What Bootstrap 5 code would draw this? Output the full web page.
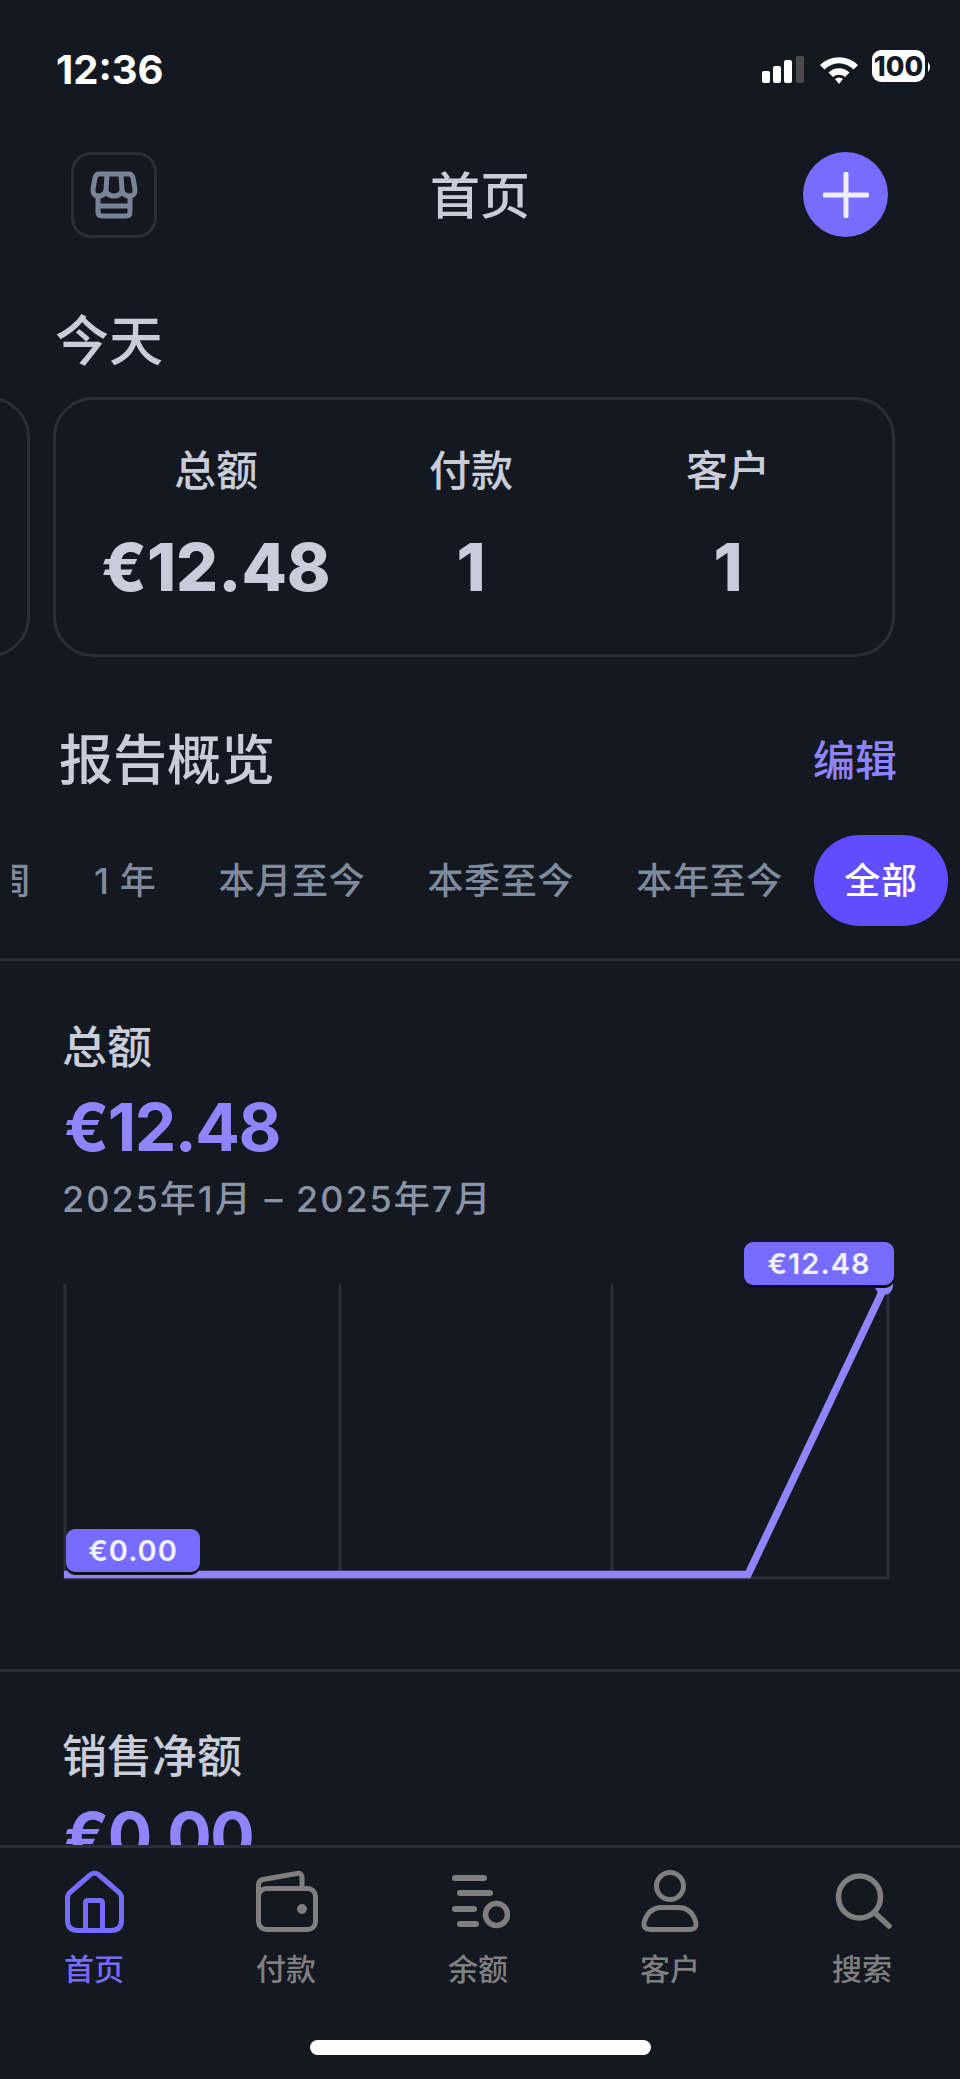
<!DOCTYPE html>
<html lang="zh-CN">

<head>
    <meta charset="utf-8">
    <title>首页</title>
    <link rel="stylesheet" href="https://cdn.jsdelivr.net/npm/bootstrap@5.3.0/dist/css/bootstrap.min.css">
    <style>
        :root {
            --app-bg: #141821;
            --app-line: #2a2e37;
            --app-text: #c9cdd9;
            --app-muted: #7f8a9c;
            --app-accent: #8f86ff;
            --app-chip: #766cff;
        }

        html,
        body {
            margin: 0;
            background-color: var(--app-bg);
        }

        body {
            font-family: Inter, "Noto Sans CJK SC", sans-serif;
            color: var(--app-text);
        }

        .app-shell {
            width: 960px;
            height: 2079px;
            overflow: hidden;
        }

        .app-main {
            min-height: 0;
            overflow: hidden;
        }

        /* status bar */
        .status-row {
            height: 152px;
            padding: 50px 29px 0 56px;
        }

        .status-time {
            font-size: 40px;
            font-weight: 700;
            line-height: 40px;
            color: #fff;
        }

        /* header */
        .top-row {
            height: 85px;
            padding: 0 72px 0 71px;
        }

        .store-btn {
            width: 86px;
            height: 86px;
            border: 3px solid var(--app-line);
            border-radius: 20px;
        }

        .plus-btn {
            width: 85px;
            height: 85px;
            background-color: var(--app-chip);
        }

        .top-title {
            font-size: 50px;
            font-weight: 500;
            line-height: 60px;
            padding-top: 2px;
        }

        /* today cards */
        .day-title {
            margin: 73px 0 0 55px;
            font-size: 54px;
            font-weight: 500;
            line-height: 64px;
        }

        .day-track {
            gap: 23px;
            padding-right: 65px;
            margin-top: 23px;
        }

        .day-card {
            flex: 0 0 842px;
            height: 260px;
            border: 3px solid var(--app-line);
            border-radius: 40px;
        }

        .day-cells {
            padding-left: 27px;
        }

        .day-cell-a {
            width: 266px;
        }

        .day-cell-b {
            width: 244px;
        }

        .day-cell-c {
            width: 270px;
        }

        .day-label {
            font-size: 42px;
            font-weight: 500;
            line-height: 50px;
            margin-top: 46px;
        }

        .day-value {
            font-size: 66px;
            font-weight: 800;
            line-height: 80px;
            margin-top: 31px;
        }

        /* report */
        .report-head {
            padding: 0 63px 0 59px;
            margin-top: 71px;
        }

        .report-title {
            font-size: 54px;
            font-weight: 500;
            line-height: 66px;
        }

        .report-edit {
            font-size: 42px;
            font-weight: 500;
            line-height: 50px;
            color: var(--app-accent);
        }

        .range-track {
            margin: 41px 12px 0;
            height: 91px;
        }

        .range-item {
            font-size: 36px;
            font-weight: 500;
            color: var(--app-muted);
            margin-right: 62px;
            white-space: nowrap;
            letter-spacing: 0.7px;
        }

        .range-on {
            width: 134px;
            height: 91px;
            margin: 0 0 0 -31px;
            background-color: #5f4dff;
            color: #fff;
        }

        .split-line {
            height: 3px;
            background-color: var(--app-line);
        }

        .range-split {
            margin-top: 32px;
        }

        /* metric blocks */
        .metric-name {
            font-size: 45px;
            line-height: 56px;
            margin: 59px 0 0 62px;
            font-weight: 500;
        }

        .metric-value {
            font-size: 66px;
            font-weight: 700;
            line-height: 80px;
            margin: 11px 0 0 64px;
            color: var(--app-accent);
            letter-spacing: -1.5px;
        }

        .metric-range {
            font-size: 36px;
            font-weight: 500;
            line-height: 44px;
            margin: 10px 0 0 62px;
            color: #8a93a6;
            letter-spacing: 2px;
        }

        .chart-box {
            width: 960px;
            height: 427px;
            margin-top: 21px;
        }

        .chart-box svg {
            display: block;
        }

        .chart-chip {
            position: absolute;
            height: 43px;
            border-radius: 9px;
            background-color: var(--app-chip);
            color: #f2f1ff;
            font-size: 29px;
            font-weight: 600;
            line-height: 43px;
            letter-spacing: 1px;
            box-shadow: 0 3px 0 #0e1016;
        }

        .chip-high {
            left: 744px;
            top: 0;
            width: 150px;
        }

        .chip-low {
            left: 66px;
            top: 287px;
            width: 134px;
        }

        .net-name {
            margin-top: 57px;
        }

        /* bottom tabs */
        .tab-bar {
            height: 234px;
            border-top: 3px solid var(--app-line);
            background-color: var(--app-bg);
            flex: 0 0 234px;
        }

        .tab-row {
            padding-top: 22px;
            margin-left: -2px;
        }

        .tab-cell {
            flex: 0 0 192px;
            color: #7f7f7f;
            font-size: 30px;
            font-weight: 500;
            line-height: 36px;
        }

        .tab-cell svg {
            display: block;
            margin-bottom: 17px;
        }

        .tab-on {
            color: var(--app-chip);
        }

        .home-bar {
            width: 341px;
            height: 15px;
            border-radius: 8px;
            background-color: #fff;
            margin: 53px auto 0;
        }
    </style>
</head>

<body>
    <div class="app-shell d-flex flex-column">
        <div class="app-main flex-grow-1">

            <!-- Status bar -->
            <div class="status-row d-flex justify-content-between align-items-start">
                <div class="status-time">12:36</div>
                <svg width="170" height="34" viewBox="0 0 170 34">
                    <g fill="#fff">
                        <rect x="1" y="21" width="8" height="12" rx="2" />
                        <rect x="12" y="16" width="8" height="17" rx="2" />
                        <rect x="23" y="10" width="8" height="23" rx="2" />
                    </g>
                    <rect x="35" y="6" width="8" height="27" rx="2" fill="#4a4a4c" />
                    <path d="M59 15 A 27 27 0 0 1 97 15 L 92.500 19.500 A 20 20 0 0 0 63.500 19.500 Z" fill="#fff" />
                    <path d="M67.500 22.500 A 15 15 0 0 1 88.500 22.500 L 84 27 A 9 9 0 0 0 72 27 Z" fill="#fff" />
                    <path d="M74 29 A 6.500 6.500 0 0 1 82 29 L 78 34 Z" fill="#fff" />
                    <rect x="111" y="0" width="53" height="32" rx="9" fill="#fff" />
                    <path d="M167 12 Q 171 17 167 22 Z" fill="#fff" />
                    <text x="137.500" y="26" text-anchor="middle" font-family="Inter, sans-serif" font-size="27" font-weight="800" fill="#141821">100</text>
                </svg>
            </div>

            <!-- Header -->
            <div class="top-row d-flex justify-content-between align-items-center">
                <div class="store-btn d-flex align-items-center justify-content-center">
                    <svg width="50" height="50" viewBox="0 0 50 50" fill="none" stroke="#7b8496" stroke-width="5" stroke-linecap="round" stroke-linejoin="round">
                        <path d="M10 4 H40 Q43 4 44 8 L46 19 Q46.500 26 40.500 26 Q35 26 33 21 Q31 26 25 26 Q19 26 17 21 Q15 26 9.500 26 Q3.500 26 4 19 L6 8 Q7 4 10 4 Z" />
                        <path d="M18 5 L17 20 M32 5 L33 20" />
                        <path d="M9 26 V42 Q9 46 13 46 H37 Q41 46 41 42 V26 M9 36 H41" />
                    </svg>
                </div>
                <div class="top-title">首页</div>
                <div class="plus-btn rounded-circle d-flex align-items-center justify-content-center">
                    <svg width="46" height="46" viewBox="0 0 46 46" stroke="#eeeeff" stroke-width="5" stroke-linecap="round">
                        <path d="M23 2 V44 M2 23 H44" />
                    </svg>
                </div>
            </div>

            <!-- Today -->
            <div class="day-title">今天</div>
            <div class="day-track d-flex justify-content-end overflow-hidden">
                <div class="day-card"></div>
                <div class="day-card day-cells d-flex text-center">
                    <div class="day-cell-a">
                        <div class="day-label">总额</div>
                        <div class="day-value">€12.48</div>
                    </div>
                    <div class="day-cell-b">
                        <div class="day-label">付款</div>
                        <div class="day-value">1</div>
                    </div>
                    <div class="day-cell-c">
                        <div class="day-label">客户</div>
                        <div class="day-value">1</div>
                    </div>
                </div>
            </div>

            <!-- Report overview -->
            <div class="report-head d-flex justify-content-between align-items-center">
                <div class="report-title">报告概览</div>
                <div class="report-edit">编辑</div>
            </div>
            <div class="range-track d-flex justify-content-end align-items-center overflow-hidden">
                <div class="range-item flex-shrink-0">1 周</div>
                <div class="range-item flex-shrink-0">1 年</div>
                <div class="range-item flex-shrink-0">本月至今</div>
                <div class="range-item flex-shrink-0">本季至今</div>
                <div class="range-item flex-shrink-0">本年至今</div>
                <div class="range-item range-on flex-shrink-0 rounded-pill d-flex align-items-center justify-content-center">全部</div>
            </div>
            <div class="split-line range-split"></div>

            <!-- Total -->
            <div class="metric-name">总额</div>
            <div class="metric-value">€12.48</div>
            <div class="metric-range">2025年1月 – 2025年7月</div>
            <div class="chart-box position-relative">
                <svg width="960" height="352" viewBox="0 0 960 352" fill="none">
                    <path d="M65 42 V336 H888 V42 M340 42 V336 M612 42 V336" stroke="#2a2e37" stroke-width="3" />
                    <path d="M64 332.500 H748 L884 46" stroke="#8f86ff" stroke-width="7.500" />
                    <circle cx="884" cy="44" r="9" fill="#8f86ff" />
                </svg>
                <div class="chart-chip chip-high text-center">€12.48</div>
                <div class="chart-chip chip-low text-center">€0.00</div>
            </div>
            <div class="split-line"></div>

            <!-- Net sales, runs under the tab bar -->
            <div class="metric-name net-name">销售净额</div>
            <div class="metric-value">€0.00</div>
        </div>

        <!-- Bottom tabs -->
        <div class="tab-bar">
            <div class="tab-row d-flex text-center">
                <div class="tab-cell tab-on d-flex flex-column align-items-center">
                    <svg width="64" height="64" viewBox="0 0 64 64" fill="none" stroke="currentColor" stroke-width="5" stroke-linecap="round" stroke-linejoin="round">
                        <path d="M5.500 28 Q5.500 24 9 21.500 L28 5 Q32.500 1.500 37 5 L56 21.500 Q59.500 24 59.500 28 V50 Q59.500 60.500 49 60.500 H16 Q5.500 60.500 5.500 50 Z" />
                        <path d="M23.500 60 V33 Q23.500 30.500 26 30.500 H38 Q40.500 30.500 40.500 33 V60" />
                    </svg>
                    首页
                </div>
                <div class="tab-cell d-flex flex-column align-items-center">
                    <svg width="64" height="64" viewBox="0 0 64 64" fill="none" stroke="currentColor" stroke-width="5" stroke-linecap="round" stroke-linejoin="round">
                        <rect x="4.500" y="18.500" width="57" height="41" rx="8" />
                        <path d="M4.500 26 V15 Q4.500 10.500 9 9.500 L43 3.500 Q48 2.500 48 8 V18" />
                        <circle cx="48" cy="39" r="5" fill="currentColor" stroke="none" />
                    </svg>
                    付款
                </div>
                <div class="tab-cell d-flex flex-column align-items-center">
                    <svg width="64" height="64" viewBox="0 0 64 64" fill="none" stroke="currentColor" stroke-width="5.500" stroke-linecap="round" stroke-linejoin="round">
                        <path d="M9 8 H38 M14 23 H44 M9 39 H28 M14 54 H30" stroke-width="6" />
                        <circle cx="50.500" cy="44.500" r="11" />
                    </svg>
                    余额
                </div>
                <div class="tab-cell d-flex flex-column align-items-center">
                    <svg width="64" height="64" viewBox="0 0 64 64" fill="none" stroke="currentColor" stroke-width="5" stroke-linecap="round" stroke-linejoin="round">
                        <circle cx="32" cy="16" r="13.500" />
                        <path d="M12 59.500 H52 Q58.500 59.500 58 53 Q54 37.500 40 37.500 H24 Q10 37.500 6 53 Q5.500 59.500 12 59.500 Z" />
                    </svg>
                    客户
                </div>
                <div class="tab-cell d-flex flex-column align-items-center">
                    <svg width="64" height="64" viewBox="0 0 64 64" fill="none" stroke="currentColor" stroke-width="5.500" stroke-linecap="round" stroke-linejoin="round">
                        <circle cx="29.500" cy="27" r="21" />
                        <path d="M45 43 L59 56" />
                    </svg>
                    搜索
                </div>
            </div>
            <div class="home-bar"></div>
        </div>
    </div>

    <script src="https://cdn.jsdelivr.net/npm/bootstrap@5.3.0/dist/js/bootstrap.bundle.min.js"></script>
</body>

</html>
